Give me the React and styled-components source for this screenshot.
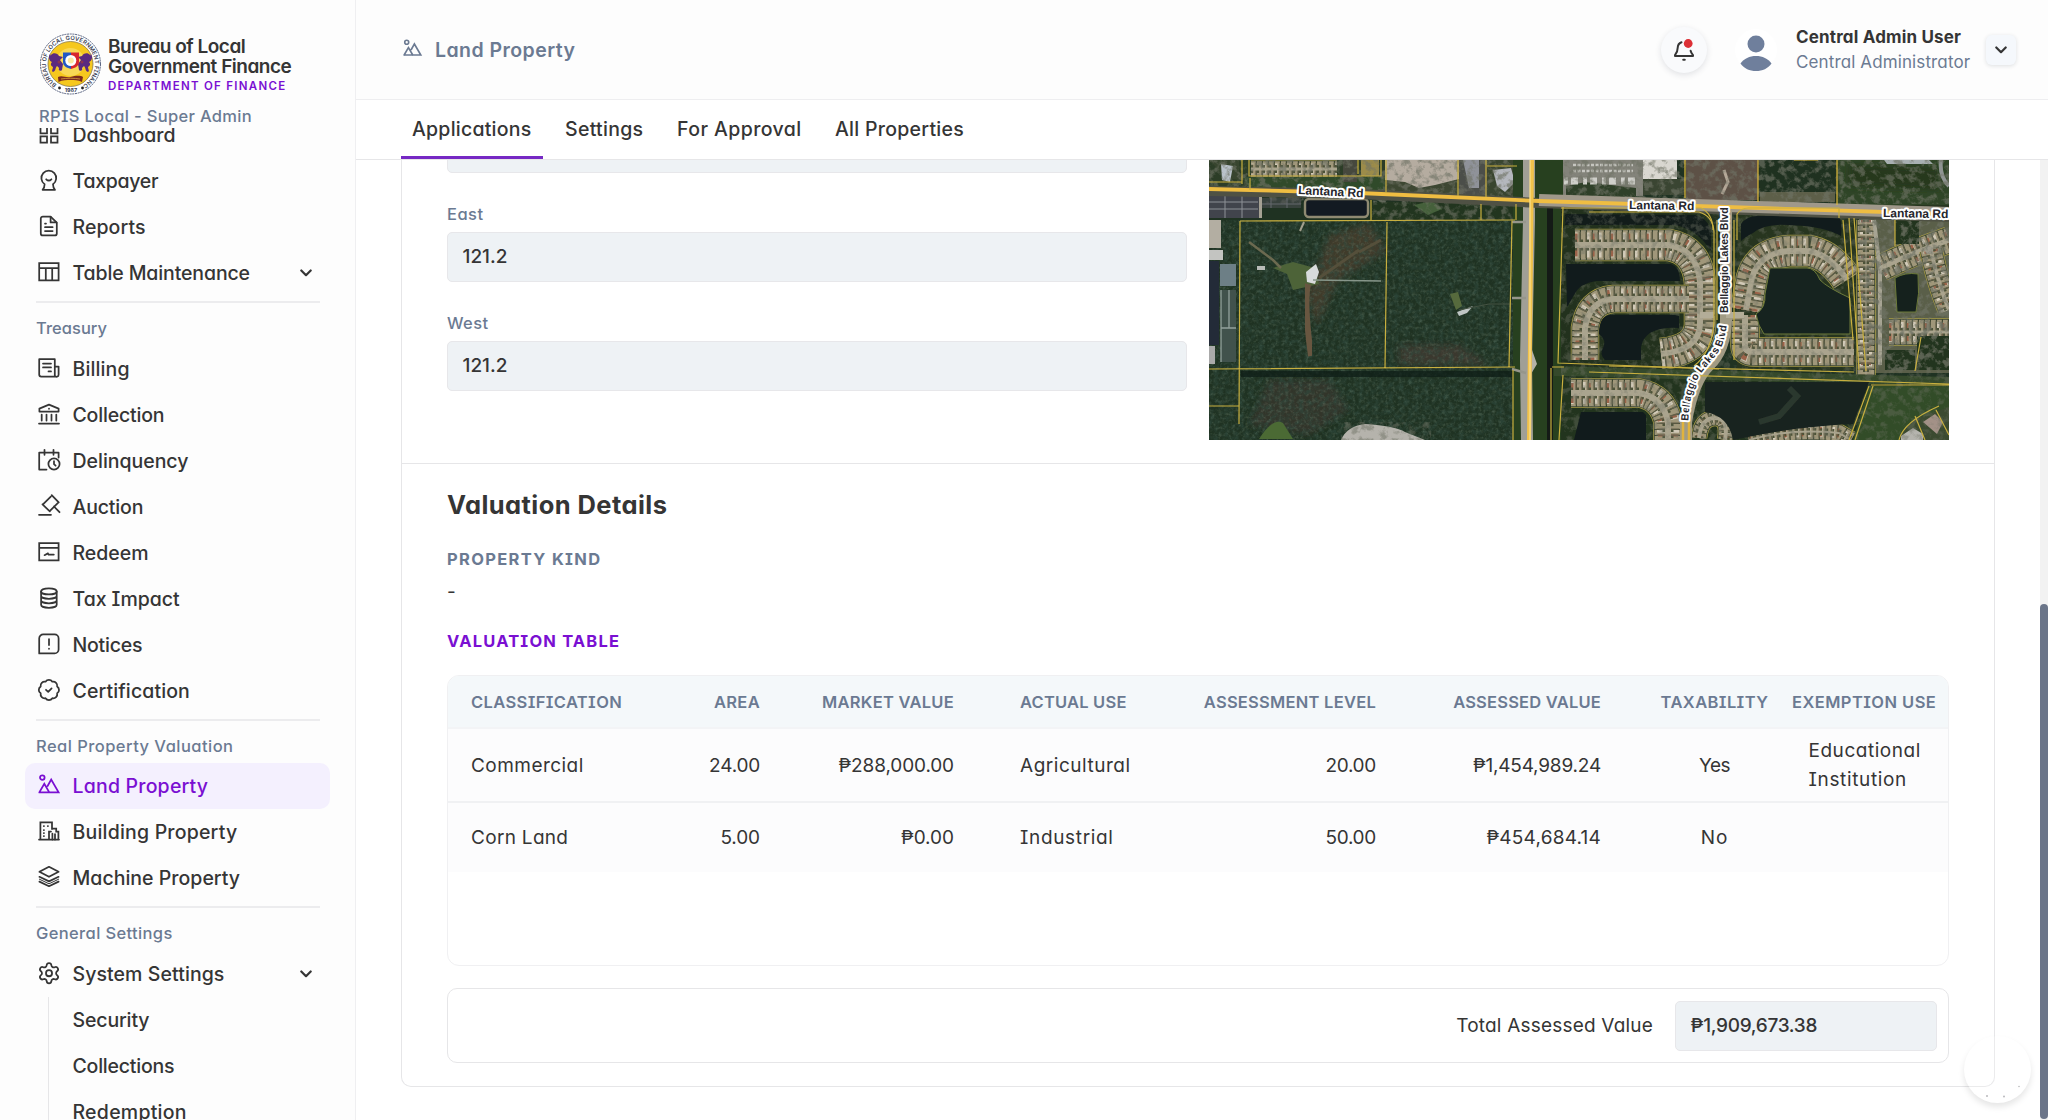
import React from "react";
import styled, { createGlobalStyle, css } from "styled-components";

const ink = "#353535";
const slate = "#6b7a92";
const purple = "#7a0fd2";
const line = "#e6e6e8";

const GlobalStyle = createGlobalStyle`
  *, *::before, *::after { box-sizing: border-box; }
  body {
    margin: 0;
    height: 1120px;
    overflow: hidden;
    background: #fff;
    color: ${ink};
    font-family: Inter, "Noto Sans", sans-serif;
    font-feature-settings: "cv11", "cv08";
  }
`;

/* ---------- shared ---------- */

const Shell = styled.div`
  display: flex;
  height: 1120px;
  width: 2048px;
  overflow: hidden;
`;

const Text = styled.span`
  white-space: nowrap;
  letter-spacing: ${(p) => p.$ls || 0}px;
`;

const Glyph = styled.svg`
  width: 22px;
  height: 22px;
  flex: none;
  overflow: visible;
  fill: none;
  stroke: currentColor;
  stroke-width: 1.75;
  stroke-linejoin: round;
  stroke-linecap: round;
`;

const glyphs = {
  dashboard: (
    <g strokeLinejoin="miter">
      <path d="M2.5 2.8h6.5v6.5H2.5zM13 2.8h6.5v6.5H13zM2.5 12.3h6.5v6.3H2.5zM13 12.3h6.5v6.3H13z" />
    </g>
  ),
  taxpayer: (
    <g>
      <path d="M6.6 14.2A7.4 7.4 0 1 1 15 14.2c0 2 .6 4 2 5.6H4.6c1.4-1.6 2-3.6 2-5.6z" />
      <path d="M8.2 9.3c1.6 1.5 3.6 1.5 5.2 0" />
    </g>
  ),
  reports: (
    <g>
      <path d="M12.6.6H4.8A2 2 0 0 0 2.8 2.6v14.8a2 2 0 0 0 2 2h12a2 2 0 0 0 2-2V6.6z" />
      <path d="M12.6.8v5.6h5.8M7 7.5h1M7 11.2h7.6M7 15h7.6" />
    </g>
  ),
  table: (
    <g strokeLinejoin="miter">
      <path d="M1.2 1h19.4v17.4H1.2zM1.2 6h19.4M7.8 6v12.4M14.2 6v12.4" />
    </g>
  ),
  billing: (
    <g>
      <path d="M1.2 1.2h15.6v17.4H3.2a2 2 0 0 1-2-2zM16.8 8.5h3.8v8.1a2 2 0 0 1-3.8 1" />
      <path d="M5 5.6h8M5 9.4h8M10.5 13.4h2.5" />
    </g>
  ),
  collection: (
    <g>
      <path d="M11 .6l9.6 4v3H1.4v-3zM11 4.6v.2" />
      <path d="M3.7 10.5v6M8.5 10.5v6M13.5 10.5v6M18.3 10.5v6M1 19.5h20" />
    </g>
  ),
  delinquency: (
    <g>
      <path d="M8.5 19.5H1.2V2.6h19.4v5M6.5-.2v5M15.5-.2v5" />
      <circle cx="16" cy="14" r="5.6" />
      <path d="M16 11.2v3l1.6 1.5" />
    </g>
  ),
  auction: (
    <g>
      <path d="M13.7-.8l7 7.2M12.8.6L5.2 8.2M20 6.8l-7.8 7.8M4.5 8.4l7.3 7M16 10.5l5.5 5.7M1 18.8h12" />
    </g>
  ),
  redeem: (
    <g strokeLinejoin="miter">
      <path d="M1.2 1h19.4v17.4H1.2zM1.2 5.8h19.4" />
      <path d="M6.5 13.2l3.3-1.8.8 1.2h5.2" />
    </g>
  ),
  taximpact: (
    <g>
      <ellipse cx="10.9" cy="3.4" rx="7.8" ry="3" />
      <path d="M3.1 3.4v13.4c0 1.7 3.5 3 7.8 3s7.8-1.3 7.8-3V3.4M3.1 7.8c0 1.7 3.5 3 7.8 3s7.8-1.3 7.8-3M3.1 12.3c0 1.7 3.5 3 7.8 3s7.8-1.3 7.8-3" />
    </g>
  ),
  notices: (
    <g>
      <path d="M5.2.4h11.4a4 4 0 0 1 4 4v11a4 4 0 0 1-4 4H1.2V4.4a4 4 0 0 1 4-4zM11 5v6M11 14.6v.2" />
    </g>
  ),
  certification: (
    <g>
      <path
        transform="translate(-1.2 -2.2) scale(1.01)"
        d="M3.85 8.62a4 4 0 0 1 4.78-4.77 4 4 0 0 1 6.74 0 4 4 0 0 1 4.78 4.78 4 4 0 0 1 0 6.74 4 4 0 0 1-4.77 4.78 4 4 0 0 1-6.75 0 4 4 0 0 1-4.78-4.77 4 4 0 0 1 0-6.76Z"
      />
      <path d="M8 9.8l2.2 2 3.4-3.4" />
    </g>
  ),
  land: (
    <g strokeLinejoin="miter">
      <circle cx="4.3" cy="2.6" r="2.3" />
      <path d="M1.3 17.4h19.3L13.2 4.6 9.6 11M1.3 17.4L6.3 8.8l5 8.6" />
    </g>
  ),
  building: (
    <g strokeLinejoin="miter">
      <path d="M14 8V1.4H2.4v17.2M1 18.6h20M14 7.6h4.2v3h2.2v8M11 18.6v-8h2" />
      <path d="M5.8 5h.2M9.8 5h.2M5.8 9h.2M5.8 12h.2M5.8 15h.2M14.4 12.5v6M17 13v5.5" />
    </g>
  ),
  machine: (
    <g>
      <path d="M11-.2l9.6 5L11 9.8l-9.6-5zM1.4 9.8l9.6 4.6 9.6-4.6M1.4 14.6L11 19.2l9.6-4.6" />
      <path d="M1.4 12.2l9.6 4.6 9.6-4.6" strokeWidth="1" />
    </g>
  ),
  settings: (
    <g transform="translate(-1.1 -1.9) scale(1.01)">
      <path d="M9.671 4.136a2.34 2.34 0 0 1 4.659 0 2.34 2.34 0 0 0 3.319 1.915 2.34 2.34 0 0 1 2.33 4.033 2.34 2.34 0 0 0 0 3.831 2.34 2.34 0 0 1-2.33 4.033 2.34 2.34 0 0 0-3.319 1.915 2.34 2.34 0 0 1-4.659 0 2.34 2.34 0 0 0-3.32-1.915 2.34 2.34 0 0 1-2.33-4.033 2.34 2.34 0 0 0 0-3.831A2.34 2.34 0 0 1 6.35 6.051a2.34 2.34 0 0 0 3.319-1.915" />
      <circle cx="12" cy="12" r="3" />
    </g>
  ),
};

const Icon = ({ name }) => <Glyph viewBox="0 0 22 22">{glyphs[name]}</Glyph>;

const ChevronSvg = styled.svg`
  width: 12px;
  height: 8px;
  fill: none;
  stroke: ${ink};
  stroke-width: 2.2;
  stroke-linecap: round;
  stroke-linejoin: round;
`;
const Chevron = () => (
  <ChevronSvg viewBox="0 0 12 8">
    <path d="M1.3 1.5L6 6.2l4.7-4.7" />
  </ChevronSvg>
);

/* ---------- sidebar ---------- */

const Sidebar = styled.aside`
  width: 356px;
  flex: none;
  background: #fdfdfd;
  border-right: 1px solid #efeff1;
  display: flex;
  flex-direction: column;
`;

const BrandBlock = styled.div`
  height: 128px;
  flex: none;
  padding: 32px 0 0 39px;
`;
const BrandRow = styled.div`
  display: flex;
  gap: 6px;
  height: 64px;
`;
const SealSvg = styled.svg`
  width: 63px;
  height: 64px;
  flex: none;
`;
const BrandText = styled.div`
  display: flex;
  flex-direction: column;
  padding-top: 5px;
  font-size: 19px;
  font-weight: 600;
  line-height: 20px;
  font-feature-settings: "cv11";
`;
const Department = styled(Text)`
  margin-top: 1px;
  font-size: 11.5px;
  font-weight: 600;
  line-height: 16px;
  color: ${purple};
`;
const Edition = styled(Text)`
  display: block;
  margin-top: 9px;
  font-size: 16.5px;
  font-weight: 500;
  line-height: 22px;
  color: ${slate};
`;

const Nav = styled.nav`
  display: flex;
  flex-direction: column;
  flex: 1;
  min-height: 0;
  overflow: hidden;
`;
const Group = styled.div`
  display: flex;
  flex-direction: column;
  flex: none;
  ${(p) => p.$first && css`margin-top: -16px;`}
`;
const Divider = styled.hr`
  width: 284px;
  height: 2px;
  flex: none;
  margin: 5px 0 0 36px;
  border: 0;
  background: #ececee;
`;
const GroupTitle = styled(Text)`
  display: block;
  padding: 15px 0 7.5px 36px;
  line-height: 20px;
  font-size: 16.5px;
  font-weight: 500;
  color: ${slate};
`;
const Item = styled.a`
  height: 46px;
  flex: none;
  margin: 0 25px;
  padding: 0 18px 0 13px;
  display: flex;
  align-items: center;
  gap: 12.5px;
  border-radius: 10px;
  font-size: 19.5px;
  font-weight: 450;
  ${(p) =>
    p.$active &&
    css`
      background: #f4f0fe;
      color: ${purple};
    `}
`;
const Push = styled.span`
  margin-left: auto;
  display: flex;
`;
const SubMenu = styled.div`
  margin-left: 48px;
  border-left: 1px solid ${line};
  display: flex;
  flex-direction: column;
`;
const SubItem = styled.a`
  height: 46px;
  flex: none;
  padding-left: 23.5px;
  display: flex;
  align-items: center;
  font-size: 19.5px;
  font-weight: 450;
`;

const groups = [
  {
    items: [
      ["dashboard", "Dashboard", -0.06],
      ["taxpayer", "Taxpayer", -0.3],
      ["reports", "Reports", 0.08],
      ["table", "Table Maintenance", -0.12, true],
    ],
  },
  {
    title: ["Treasury", 0.04],
    items: [
      ["billing", "Billing", 0.12],
      ["collection", "Collection", -0.19],
      ["delinquency", "Delinquency", -0.02],
      ["auction", "Auction", -0.15],
      ["redeem", "Redeem", -0.02],
      ["taximpact", "Tax Impact", -0.05],
      ["notices", "Notices", -0.22],
      ["certification", "Certification", 0.12],
    ],
  },
  {
    title: ["Real Property Valuation", 0.46],
    items: [
      ["land", "Land Property", 0.2],
      ["building", "Building Property", 0.2],
      ["machine", "Machine Property", 0.02],
    ],
  },
  {
    title: ["General Settings", 0.37],
    items: [["settings", "System Settings", 0.08, true]],
  },
];

const Lion = ({ flip }) => (
  <g transform={flip ? "translate(63 0) scale(-1 1)" : undefined} fill="#5a2a80">
    <path d="M12 23c2-3 7-2 8 1l4 1-3 3 3 4-1 6c-2 2-4 0-3-2l-2-2c-2 2-1 5-4 6-2-1 0-3 0-5-2-1-3-3-1-5-3-1-4-5-2-8 1 2 0 2 1 1z" />
    <circle cx="20" cy="30" r="1.5" fill="#8a3550" />
  </g>
);

const Seal = () => (
  <SealSvg viewBox="0 0 63 64">
    <defs>
      <path id="sealArc" d="M18.5 53A24.4 24.4 0 1 1 44.5 53" />
    </defs>
    <circle cx="31.5" cy="32" r="30" fill="#fff" stroke="#55607e" strokeWidth="1" strokeDasharray="2 .7" />
    <circle cx="31.5" cy="32" r="22.5" fill="#f6c81e" stroke="#8a7a4a" strokeWidth=".8" />
    <circle cx="31.5" cy="30" r="14" fill="#fbe27a" opacity=".6" />
    <text fontSize="5.8" fontWeight="600" fill="#3b3f55" letterSpacing=".1">
      <textPath href="#sealArc" startOffset="1">BUREAU OF LOCAL GOVERNMENT FINANCE</textPath>
    </text>
    <circle cx="20.5" cy="56" r="1.4" fill="#222" />
    <circle cx="43.5" cy="56" r="1.4" fill="#222" />
    <text x="32" y="60.3" fontSize="5.4" fontWeight="700" textAnchor="middle" fill="#3b3f55">1987</text>
    <Lion />
    <Lion flip />
    <path d="M24 20.5h8v16.5c-4-1-8-3-8-7z" fill="#2257c4" />
    <path d="M32 20.5h8v9.5c0 4-4 6-8 7z" fill="#d7262f" />
    <circle cx="31.8" cy="28.5" r="5.5" fill="#fff" />
    <circle cx="31.8" cy="28.5" r="3" fill="#fbe9a6" />
    <path d="M19 45c4-2 8 1 12.5 0s9-2 12.500 0l-1 5c-4-2-8-2-11.5-2s-8 0-12 2z" fill="#7c2b1e" />
    <path d="M22 47c6-1 13-1 19 0" stroke="#d9a13b" strokeWidth=".8" fill="none" />
  </SealSvg>
);

/* ---------- header ---------- */

const Main = styled.main`
  flex: 1;
  min-width: 0;
  display: flex;
  flex-direction: column;
`;
const TopBar = styled.header`
  height: 100px;
  flex: none;
  background: #fdfdfd;
  border-bottom: 1px solid #eeeef0;
  display: flex;
  align-items: center;
  padding: 0 32px 0 47px;
`;
const PageTitle = styled.h1`
  margin: 0;
  display: flex;
  align-items: center;
  gap: 13px;
  font-size: 19.5px;
  font-weight: 600;
  color: ${slate};
  svg { width: 19px; height: 19px; stroke-width: 1.9; }
`;
const Bell = styled.button`
  margin-left: auto;
  width: 46px;
  height: 46px;
  border: 0;
  padding: 0;
  border-radius: 50%;
  background: #f9fafc;
  box-shadow: 0 2px 6px rgba(30, 40, 60, 0.13);
  display: grid;
  place-items: center;
  svg { width: 22px; height: 24px; overflow: visible; }
`;
const Avatar = styled.div`
  width: 42px;
  height: 42px;
  margin-left: 28px;
  border-radius: 50%;
  background: #fff;
  svg { display: block; width: 42px; height: 46px; overflow: visible; }
`;
const Who = styled.div`
  margin-left: 19px;
  width: 190px;
  display: flex;
  flex-direction: column;
  font-size: 17px;
  line-height: 25px;
`;
const Name = styled(Text)`
  font-weight: 650;
`;
const Role = styled(Text)`
  color: ${slate};
`;
const Toggle = styled.button`
  width: 30px;
  height: 30px;
  border: 0;
  padding: 0;
  border-radius: 6px;
  background: #f5f8fc;
  box-shadow: 0 1px 4px rgba(30, 40, 60, 0.14);
  display: grid;
  place-items: center;
`;

const Tabs = styled.div`
  height: 60px;
  flex: none;
  border-bottom: 1px solid ${line};
  padding-left: 45px;
  display: flex;
  align-items: stretch;
`;
const Tab = styled.a`
  width: ${(p) => p.$w}px;
  margin-right: ${(p) => p.$after || 0}px;
  padding: 1px 0 0 11px;
  display: flex;
  align-items: center;
  font-size: 19.5px;
  font-weight: 500;
  border-bottom: 3px solid ${(p) => (p.$active ? "#7629c4" : "transparent")};
`;

/* ---------- content ---------- */

const Scroller = styled.div`
  flex: 1;
  min-height: 0;
  display: flex;
  justify-content: space-between;
  align-items: flex-start;
  padding-left: 45px;
  overflow: hidden;
`;
const Track = styled.div`
  width: 8px;
  height: 960px;
  background: #f2f2f2;
  padding-top: 444px;
`;
const Thumb = styled.div`
  height: 515px;
  border-radius: 4px;
  background: #6b7589;
`;
const Card = styled.section`
  width: 1594px;
  height: 927px;
  border: 1px solid ${line};
  border-top: 0;
  border-radius: 0 0 10px 10px;
`;
const Boundaries = styled.div`
  height: 304px;
  padding: 0 45px;
  border-bottom: 1px solid ${line};
  display: grid;
  grid-template-columns: 740px 740px;
  column-gap: 22px;
  overflow: hidden;
`;
const FieldColumn = styled.div`
  display: flex;
  flex-direction: column;
  margin-top: -37px;
`;
const Readout = styled.div`
  height: 50px;
  flex: none;
  border: 1px solid #e7e7ea;
  border-radius: 5px;
  background: #eef2f5;
  display: flex;
  align-items: center;
  padding: 0 15px 1px 14.5px;
  font-size: 19px;
  font-weight: 450;
  width: ${(p) => (p.$w ? p.$w + "px" : "auto")};
`;
const FieldLabel = styled(Text)`
  display: block;
  padding: 31px 0 8px;
  line-height: 20px;
  font-size: 16.5px;
  font-weight: 450;
  color: ${slate};
`;
const MapSvg = styled.svg`
  display: block;
  width: 740px;
  height: 280px;
`;

const Valuation = styled.div`
  padding: 25px 45px 0;
  display: flex;
  flex-direction: column;
`;
const Heading = styled.h2`
  margin: 0 0 28px;
  font-size: 25.5px;
  font-weight: 650;
  line-height: 32px;
`;
const Caption = styled(Text)`
  font-size: 16.5px;
  line-height: 20px;
  font-weight: ${(p) => (p.$accent ? 700 : 650)};
  color: ${(p) => (p.$accent ? purple : slate)};
`;
const Kind = styled.div`
  padding: 11px 0 27px;
  font-size: 19px;
  line-height: 24px;
`;
const Table = styled.div`
  margin-top: 24px;
  height: 291px;
  border: 1px solid #f0f0f2;
  border-radius: 12px;
  overflow: hidden;
  display: flex;
  flex-direction: column;
`;
const Row = styled.div`
  display: grid;
  grid-template-columns: 177px 112px 194px 191px 231px 225px 179px 168px;
  padding-left: 23px;
  align-items: center;
  flex: none;
  height: ${(p) => p.$h}px;
  ${(p) =>
    p.$head
      ? css`
          padding-top: 1px;
          background: #f4f8fa;
          border-bottom: 2px solid #f3f4f6;
          font-size: 16.5px;
          font-weight: 640;
          color: ${slate};
        `
      : css`
          background: #fcfcfd;
          font-size: 19px;
          font-weight: 410;
          line-height: 29px;
        `}
  ${(p) => p.$ruled && css`border-bottom: 2px solid #f0f1f3;`}
`;
const Cell = styled.div`
  text-align: ${(p) => p.$align || "left"};
  padding-left: ${(p) => p.$pad || 0}px;
`;
const Stack = styled.div`
  display: flex;
  flex-direction: column;
`;
const Total = styled.div`
  margin-top: 22px;
  height: 75px;
  border: 1px solid ${line};
  border-radius: 10px;
  display: flex;
  align-items: center;
  justify-content: flex-end;
  gap: 22px;
  padding: 0 11px 0 0;
  font-size: 19px;
`;
const Fab = styled.div`
  position: absolute;
  left: 1964px;
  top: 1036px;
  width: 67px;
  height: 67px;
  border-radius: 50%;
  background: rgba(255, 255, 255, 0.2);
  box-shadow: 0 4px 6px rgba(0, 0, 0, 0.1);
  svg { display: block; }
`;

const cols = [
  { align: "left", pad: 0, headPad: 0 },
  { align: "right", pad: 0, headPad: 0 },
  { align: "right", pad: 0, headPad: 0 },
  { align: "left", pad: 66, headPad: 66 },
  { align: "right", pad: 0, headPad: 0 },
  { align: "right", pad: 0, headPad: 0 },
  { align: "center", pad: 48, headPad: 48 },
  { align: "left", pad: 28.5, headPad: 12 },
];
const head = [
  ["CLASSIFICATION", 0.37], ["AREA", 0.31], ["MARKET VALUE", 0.26], ["ACTUAL USE", 0.2],
  ["ASSESSMENT LEVEL", 0.25], ["ASSESSED VALUE", 0.2], ["TAXABILITY", 0.4], ["EXEMPTION USE", 0.44],
];
const rows = [
  {
    h: 74,
    cells: [
      [["Commercial", 0.46]], [["24.00", -0.2]], [["₱288,000.00", -0.12]], [["Agricultural", 0.52]],
      [["20.00", -0.3]], [["₱1,454,989.24", -0.19]], [["Yes", -0.5]], [["Educational", 0.53], ["Institution", 0.65]],
    ],
  },
  {
    h: 69,
    cells: [
      [["Corn Land", 0.31]], [["5.00", -0.1]], [["₱0.00", -0.03]], [["Industrial", 0.66]],
      [["50.00", -0.3]], [["₱454,684.14", 0.22]], [["No", 0.8]], [],
    ],
  },
];

/* ---------- aerial map ---------- */

const Houses = ({ d, w = 30, road = 6, roof = "#9c6248" }) => (
  <g fill="none">
    <path d={d} stroke="#a99c45" strokeWidth={w + 1.5} />
    <path d={d} stroke="#3c4630" strokeWidth={w} />
    <path d={d} stroke="#a0977a" strokeWidth={w - 1.5} strokeDasharray="4.8 1.2" />
    <path d={d} stroke="#d2cab8" strokeWidth={w - 6} strokeDasharray="2.6 9.4" />
    <path d={d} stroke={roof} strokeWidth={w - 8} strokeDasharray="2.6 15 2 16" />
    <path d={d} stroke="#625f48" strokeWidth={w - 5} strokeDasharray="1.2 4.8" strokeDashoffset="1.5" />
    <path d={d} stroke="#4c5238" strokeWidth={road + 5} strokeDasharray="2 4" />
    <path d={d} stroke="#aaa48e" strokeWidth={road} />
  </g>
);

const MapLabel = styled.text`
  font-family: "Liberation Sans", sans-serif;
  font-weight: 700;
  font-size: ${(p) => p.$size || 12}px;
  fill: #26262c;
  stroke: #fff;
  stroke-width: 4px;
  stroke-linejoin: round;
  paint-order: stroke;
`;

const AerialMap = () => (
  <MapSvg viewBox="0 0 740 280">
    <defs>
      <filter id="leaf" x="0" y="0" width="100%" height="100%">
        <feTurbulence type="fractalNoise" baseFrequency=".2" numOctaves="4" seed="4" />
        <feColorMatrix values="0 0 0 0 .03  0 0 0 0 .07  0 0 0 0 .05  2.2 0 0 0 -.8" />
      </filter>
      <filter id="glow" x="0" y="0" width="100%" height="100%">
        <feTurbulence type="fractalNoise" baseFrequency=".3" numOctaves="3" seed="11" />
        <feColorMatrix values="0 0 0 0 .32  0 0 0 0 .42  0 0 0 0 .3  0 2 0 0 -.95" />
      </filter>
      <filter id="rubble" x="0" y="0" width="100%" height="100%">
        <feTurbulence type="fractalNoise" baseFrequency=".14" numOctaves="4" seed="7" />
        <feColorMatrix values="0 0 0 0 .16  0 0 0 0 .17  0 0 0 0 .13  4.5 0 0 0 -2.1" />
      </filter>
      <filter id="soft"><feGaussianBlur stdDeviation="3" /></filter>
      <filter id="edge"><feGaussianBlur stdDeviation=".7" /></filter>
      <path id="blvdSouth" d="M479 268C480 237 484 222 497 207S517 188 519 150" />
    </defs>

    <rect width="740" height="280" fill="#1f3222" />
    <g filter="url(#soft)">
      <path d="M120 75l40-12 18 28-50 30-20 45-10-30z" fill="#3f3a2c" />
      <path d="M190 185h60l30 20h-90z" fill="#3a382e" />
      <path d="M60 220h60l20 30-40 25-60-10z" fill="#32342a" />
    </g>
    <rect y="60" width="306" height="220" filter="url(#leaf)" opacity=".7" />
    <rect y="60" width="306" height="220" filter="url(#glow)" opacity=".28" />

    {/* north-west blocks */}
    <path d="M0 0h176v34H0z" fill="#2c3d27" />
    <Houses d="M42 9H128" w={17} road={3} roof="#8b7a55" />
    <path d="M0 0h30v20l-12-2z" fill="#38452f" />
    <path d="M12 4l12 2-3 16-8-2z" fill="#b9c2ca" />
    <path d="M34 17h142v14l-136-2z" fill="#304a2a" />
    <path d="M134 0h14v22h-14z" fill="#46483d" />
    <path d="M152 0h18v16h-18z" fill="#9c8c4a" />
    <path d="M176 0h74v34l-74-3z" fill="#b5aca0" />
    <path d="M176 20l20 2 14 6 16-3 24-6v16l-74-4z" fill="#3c4732" filter="url(#edge)" />
    <path d="M250 0h30v36h-30z" fill="#4b4e49" />
    <path d="M254 0h16v28h-10z" fill="#8f9299" />
    <path d="M278 0h34v37h-34z" fill="#39452f" />
    <path d="M284 10l18-2 4 14-10 10-8-6z" fill="#b4b7bd" />
    <path d="M348 0h86v36h-86z" fill="#83837a" />
    <path d="M357 26l20-4 50 6v12h-70z" fill="#2f4029" />
    <path d="M355 21h74" stroke="#cfcfca" strokeWidth="7" strokeDasharray="4 3 7 5" />
    <path d="M364 5h60M364 11h60" stroke="#c6c6c0" strokeWidth="2.5" strokeDasharray="3 1.5" />
    <path d="M434 0h34v19h-34z" fill="#d9d7d0" />
    <path d="M434 19h42v16h-42z" fill="#3a4532" />
    <path d="M477 0h72v40h-72z" fill="#5d5146" />
    <path d="M515 10l4 12-6 12" stroke="#b5a898" strokeWidth="3" fill="none" />
    <path d="M549 0h79v42h-79z" fill="#1f3120" />
    <path d="M551 32h75v10h-75z" fill="#5d5e48" filter="url(#edge)" />
    <path d="M628 0h112v45H628z" fill="#2f4527" />
    <path d="M640 4l90 4v22l-90-4z" fill="#26381f" filter="url(#soft)" />
    <path d="M675 0h45l4 4h-46z" fill="#a8b0b2" />
    <path d="M732 0q-2 16 8 26" stroke="#8f9492" strokeWidth="4" fill="none" />
    <rect width="740" height="44" filter="url(#rubble)" opacity=".65" />

    {/* strip south of the main road */}
    <path d="M0 36h50v22H0z" fill="#41444c" />
    <path d="M0 42h49M0 49h49M16 36v22M33 36v22M52 44h40M62 38v10M78 38v10" stroke="#8d9096" strokeWidth="1" />
    <path d="M52 38h40v10H52z" fill="#4a4c50" opacity=".6" />
    <rect x="50" y="36" width="3" height="22" fill="#a5a193" />
    <rect x="96" y="39" width="63" height="18" rx="4" fill="#131a22" stroke="#8f8a72" strokeWidth="2.4" />
    <path d="M162 42h146v17H162z" fill="#22351f" />
    <path d="M205 45l18-4 10 8-14 6z" fill="#44603a" filter="url(#edge)" />
    <rect x="162" y="40" width="146" height="20" filter="url(#rubble)" opacity=".6" />

    {/* clearings */}
    <path d="M64 108l20-6 22 6 4 16-26 6-6-16z" fill="#4d6339" filter="url(#edge)" />
    <path d="M40 82l24 18 8 8" stroke="#6c6a50" strokeWidth="2.5" fill="none" />
    <path d="M150 92l22-12M110 118l40-28" stroke="#54503a" strokeWidth="3" fill="none" filter="url(#edge)" />
    <path d="M97 112l10-8 3 8-4 12-8-2z" fill="#d8dbdc" />
    <path d="M48 106h8v4h-8z" fill="#b9bcb8" />
    <path d="M104 120l68 1" stroke="#87968a" strokeWidth="1.6" />
    <path d="M99 124c-4 18 0 50 3 72" stroke="#675641" strokeWidth="6" fill="none" filter="url(#edge)" />
    <path d="M95 62l-4 9" stroke="#a3a08e" strokeWidth="2" />
    <path d="M241 134l8-2 4 14-6 4z" fill="#566a3c" filter="url(#edge)" />
    <path d="M248 152l16-6-6 7-8 3z" fill="#bfc5c4" />
    <path d="M250 150l30-6h30" stroke="#445242" strokeWidth="1" fill="none" />
    <path d="M50 279q14-22 24-16l10 16z" fill="#4b6a34" />
    <path d="M132 280q6-14 24-16 30 2 40 8l20 8z" fill="#b5b3ac" filter="url(#edge)" />
    <rect x="132" y="262" width="90" height="18" filter="url(#rubble)" opacity=".5" />
    <path d="M0 60h12v28H0z" fill="#b3aea2" />
    <path d="M0 90h14v10H0z" fill="#c3c4c1" />
    <path d="M0 101h10v84H0z" fill="#232b38" />
    <path d="M11 104h16v22H11z" fill="#6d7f86" />
    <path d="M12 130h15v72H12z" fill="#41524c" />
    <path d="M12 130v72M20 130v38M12 168h15" stroke="#93a19c" strokeWidth="1.3" />
    <path d="M0 186h6v18H0z" fill="#aaa" />
    <path d="M32 211h274v6H32z" fill="#111b14" filter="url(#edge)" opacity=".7" />

    {/* north-south road */}
    <path d="M304 0h50v280h-50z" fill="#27401f" />
    <path d="M341 48v232" stroke="#141a16" strokeWidth="6" />
    <path d="M320 0L320 60 317 200 318 280" stroke="#a09f96" strokeWidth="12" fill="none" />
    <path d="M303 62h14M303 138h14M303 209l14 4" stroke="#96968b" strokeWidth="2.5" />
    <path d="M323 190l5 14-6 10z" fill="#b4b2a8" />

    {/* lakes subdivision, west side */}
    <path d="M352 45h158v165H352z" fill="#22311d" />
    <path d="M356 54l130 1q16 4 16 22v14q-14-22-36-26H356z" fill="#121c1a" />
    <Houses d="M366 85H460Q488 90 491 122V165Q490 190 452 194" w={31} />
    <Houses d="M376 200V168Q380 141 404 139H480" w={27} />

    {/* lakes subdivision, east side */}
    <path d="M528 45h216v165H528z" fill="#27351f" />
    <Houses d="M537 150L543 118Q550 93 580 91H600Q622 95 638 120" w={31} />
    <Houses d="M536 155V186Q536 192 545 192H645" w={28} />

    {/* east neighbourhood */}
    <path d="M650 58h90v155h-90z" fill="#5a5f49" />
    <Houses d="M657 60V215" w={18} road={1} roof="#8f6452" />
    <Houses d="M672 108Q700 94 740 80" w={26} road={5} />
    <Houses d="M680 172H740" w={26} road={3} />
    <Houses d="M722 90Q728 120 740 150" w={22} road={4} />
    <path d="M665 60l6 50v95" stroke="#a7a493" strokeWidth="4" fill="none" />
    <path d="M686 60h24v24h-24zM708 176h32v34h-32zM676 190h30v20h-30z" fill="#22341e" />
    <circle cx="720" cy="90" r="4" fill="#9e9b8d" />
    <rect x="650" y="58" width="90" height="152" filter="url(#rubble)" opacity=".6" />

    {/* canal and southern strip */}
    <path d="M345 206L740 217V228L345 216z" fill="#35492b" />
    <path d="M352 216L740 226V280H352z" fill="#22341e" />
    <Houses d="M362 233H430Q454 237 459 262V280" w={28} />
    <Houses d="M540 280q40-12 90-7l12 7" w={17} road={2} roof="#a05a3c" />
    <Houses d="M490 278q2-20 16-20t10 22" w={15} road={4} />
    <path d="M660 226h80v54h-96z" fill="#324c28" />
    <path d="M690 280q6-18 24-24l26-9v33z" fill="#3b4a30" />
    <path d="M714 262l12-8 8 8-6 12z" fill="#a39187" />
    <path d="M692 276l12-8 10 6v6h-22z" fill="#b5b4ae" />
    <rect x="352" y="46" width="388" height="234" filter="url(#rubble)" opacity=".4" />

    {/* lakes */}
    <g fill="#111b1c">
      <path d="M357 104h105q9 3 9 17h-84q-16 2-22 14l-7 12z" />
      <path d="M400 155h66l4 1v12q-34-2-38 19v13h-36q-6-6-2-12 4-8-4-14 0-17 10-19z" />
      <path d="M372 252h62l3 3v25h-72z" />
      <path d="M532 64q6-8 16-8h80q6 2 4 20-18-10-52-11-24-2-36 8-8 4-12 8z" />
    </g>
    <path d="M561 108h37q8 0 13 12 8 8 30 18v36h-86q-6-8-8-20 10-6 9-20z" fill="#16231f" stroke="#6c7a3a" />
    <path d="M686 118q10-6 23-4 2 20-2 38h-19z" fill="#15211d" stroke="#6c7a3a" />
    <path d="M496 222h164l-16 42q-50 2-100 12l-20 4q-4-24-28-28z" fill="#18231f" />
    <path d="M580 228l8 8-18 20-20 6" stroke="#2c372d" strokeWidth="6" fill="none" filter="url(#edge)" />

    {/* main roads */}
    <path d="M0 31L150 34 330 43 740 57" stroke="#4f5144" strokeWidth="10" fill="none" />
    <path d="M330 40L740 53" stroke="#9f988a" strokeWidth="12" fill="none" />
    <path d="M0 29L150 33 330 41 740 54" stroke="#efbd42" strokeWidth="3.8" fill="none" />
    <path d="M323 0L321 180 320 280" stroke="#f1c24b" strokeWidth="4" fill="none" />
    <path d="M321 0v280" stroke="#fbe7a0" strokeWidth="1" fill="none" />
    <path d="M517 50V160Q516 190 500 205T477 262V280" stroke="#a19b84" strokeWidth="12" fill="none" />
    <path d="M474 255v25M480 255v25" stroke="#e0b33e" strokeWidth="2.5" />
    <path d="M517 155h18M505 155h-14" stroke="#b3ad98" strokeWidth="6" />

    {/* parcel lines */}
    <g stroke="#c9b03f" strokeWidth="1.2" fill="none">
      <path d="M31 61L306 60M31 61L30 264M178 62L176 208M303 60L300 207M0 209L306 207M304 210v70M0 246h30" />
      <path d="M40 0v16h132V0M33 0v24M177 0v33M249 0v36M277 0v37M41 18v12M278 6h30M149 0v14M0 22h33M162 40v20M272 44v16M307 44v16" />
      <path d="M354 47L349 203 510 209M343 207h12M354 215l-4 65M342 208v72M352 48h140q12 6 12 22" />
      <path d="M476 0v38M549 0v42M628 0v45M585 0h24" stroke="#e0b93a" />
      <path d="M380 52h110q14 4 15 20v90q-2 30-20 44M528 80V54q4-6 12-6h90v10M640 58l10 152M645 58l12 153M634 60l10 120" />
      <path d="M380 212L740 224M400 206L645 212M660 226L640 280M664 226L646 280M662 225h78M690 280q4-18 40-34M706 256l10 24M727 250l13 25" />
      <path d="M686 60v26M712 177l-6 34M525 60v140M508 60v100" />
    </g>

    {/* street labels */}
    <MapLabel x="89" y="34" transform="rotate(3 89 34)">Lantana Rd</MapLabel>
    <MapLabel x="420" y="49" transform="rotate(1 420 49)">Lantana Rd</MapLabel>
    <MapLabel x="674" y="57" transform="rotate(1 674 57)">Lantana Rd</MapLabel>
    <MapLabel $size={10.5} x="519" y="153" transform="rotate(-90 519 153)">Bellaggio Lakes Blvd</MapLabel>
    <MapLabel $size={10.5}><textPath href="#blvdSouth" startOffset="7">Bellaggio Lakes Blvd</textPath></MapLabel>
  </MapSvg>
);

/* ---------- app ---------- */

export default function App() {
  return (
    <>
      <GlobalStyle />
      <Shell>
        <Sidebar>
          <BrandBlock>
            <BrandRow>
              <Seal />
              <BrandText>
                <Text $ls={-0.5}>Bureau of Local</Text>
                <Text $ls={-0.47}>Government Finance</Text>
                <Department $ls={1.27}>DEPARTMENT OF FINANCE</Department>
              </BrandText>
            </BrandRow>
            <Edition $ls={0.33}>RPIS Local - Super Admin</Edition>
          </BrandBlock>
          <Nav>
            {groups.map((g, i) => (
              <React.Fragment key={i}>
                {i > 0 && <Divider />}
                <Group $first={i === 0}>
                  {g.title && <GroupTitle $ls={g.title[1]}>{g.title[0]}</GroupTitle>}
                  {g.items.map(([icon, label, ls, more]) => (
                    <Item key={label} $active={icon === "land"}>
                      <Icon name={icon} />
                      <Text $ls={ls}>{label}</Text>
                      {more && <Push><Chevron /></Push>}
                    </Item>
                  ))}
                </Group>
              </React.Fragment>
            ))}
            <SubMenu>
              <SubItem><Text $ls={-0.14}>Security</Text></SubItem>
              <SubItem><Text $ls={-0.22}>Collections</Text></SubItem>
              <SubItem><Text $ls={0.25}>Redemption</Text></SubItem>
            </SubMenu>
          </Nav>
        </Sidebar>

        <Main>
          <TopBar>
            <PageTitle>
              <Icon name="land" />
              <Text $ls={0.45}>Land Property</Text>
            </PageTitle>
            <Bell>
              <svg viewBox="0 0 22 24" fill="none" stroke={ink} strokeWidth="2" strokeLinecap="round" strokeLinejoin="round">
                <path d="M8.5 4.3C6 5.2 4.8 7.2 4.7 9.8c0 3.4-.9 5.2-2.7 7.4v.8h18v-.8c-1.2-1.4-2-2.7-2.4-4.4M10.2 21.8h1.6" />
                <circle cx="15.2" cy="5.5" r="4.4" fill="#dc2f35" stroke="none" />
              </svg>
            </Bell>
            <Avatar>
              <svg viewBox="0 0 42 46" fill="#6f7f9c">
                <circle cx="21" cy="15" r="8.5" />
                <path d="M5.5 34.5C9 29.5 14.5 27 21 27s12 2.500 15.5 7.5C33 39.500 27.5 42 21 42S9 39.500 5.5 34.5z" />
              </svg>
            </Avatar>
            <Who>
              <Name $ls={0.17}>Central Admin User</Name>
              <Role $ls={0.12}>Central Administrator</Role>
            </Who>
            <Toggle><Chevron /></Toggle>
          </TopBar>
          <Tabs>
            <Tab $w={142} $after={11} $active><Text $ls={0.24}>Applications</Text></Tab>
            <Tab $w={112}><Text $ls={0.3}>Settings</Text></Tab>
            <Tab $w={158}><Text $ls={0.42}>For Approval</Text></Tab>
            <Tab $w={160}><Text $ls={0.27}>All Properties</Text></Tab>
          </Tabs>
          <Scroller>
            <Card>
              <Boundaries>
                <FieldColumn>
                  <Readout />
                  <FieldLabel $ls={0.45}>East</FieldLabel>
                  <Readout>121.2</Readout>
                  <FieldLabel $ls={0.36}>West</FieldLabel>
                  <Readout>121.2</Readout>
                </FieldColumn>
                <AerialMap />
              </Boundaries>
              <Valuation>
                <Heading><Text $ls={0.43}>Valuation Details</Text></Heading>
                <Caption $ls={1.33}>PROPERTY KIND</Caption>
                <Kind>-</Kind>
                <Caption $accent $ls={1.18}>VALUATION TABLE</Caption>
                <Table>
                  <Row $head $h={53}>
                    {head.map(([t, ls], i) => (
                      <Cell key={t} $align={cols[i].align} $pad={cols[i].headPad}>
                        <Text $ls={ls}>{t}</Text>
                      </Cell>
                    ))}
                  </Row>
                  {rows.map((r, i) => (
                    <Row key={i} $h={r.h} $ruled={i === 0}>
                      {r.cells.map((lines, c) => (
                        <Cell key={c} $align={cols[c].align} $pad={cols[c].pad}>
                          <Stack>
                            {lines.map(([t, ls]) => <Text key={t} $ls={ls}>{t}</Text>)}
                          </Stack>
                        </Cell>
                      ))}
                    </Row>
                  ))}
                </Table>
                <Total>
                  <Text $ls={0.2}>Total Assessed Value</Text>
                  <Readout $w={262}><Text $ls={-0.3}>₱1,909,673.38</Text></Readout>
                </Total>
              </Valuation>
            </Card>
            <Track><Thumb /></Track>
          </Scroller>
        </Main>
        <Fab>
          <svg width="67" height="67" fill="#b9b9bd">
            <circle cx="23" cy="60" r="1" />
            <circle cx="40" cy="60.5" r="1" />
            <circle cx="55" cy="50.5" r=".8" />
          </svg>
        </Fab>
      </Shell>
    </>
  );
}
